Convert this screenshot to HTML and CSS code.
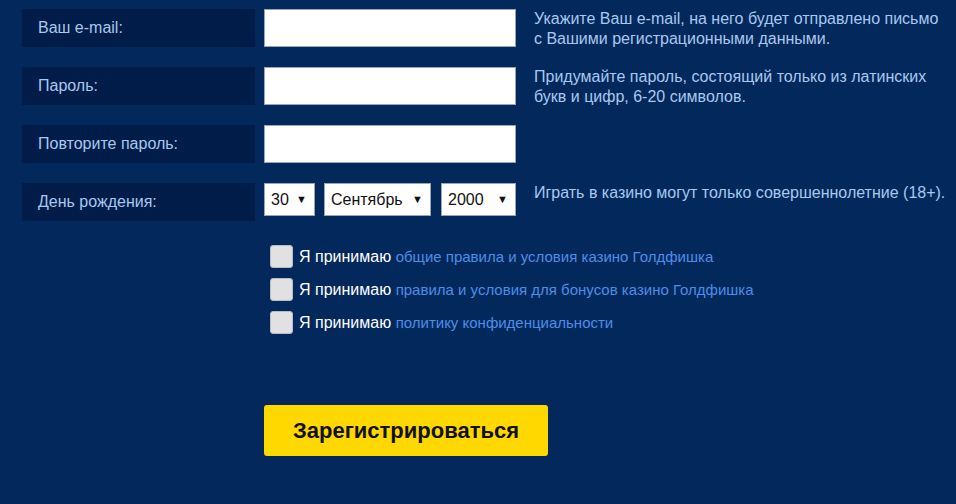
FILE: index.html
```html
<!DOCTYPE html>
<html lang="ru">
<head>
<meta charset="utf-8">
<title>Регистрация</title>
<link rel="stylesheet" href="styles.css">
</head>
<body>
<form class="reg">
  <div class="row">
    <div class="label">Ваш e-mail:</div>
    <div class="control"><input class="text" type="text"></div>
    <div class="help">Укажите Ваш e-mail, на него будет отправлено письмо<br>с Вашими регистрационными данными.</div>
  </div>
  <div class="row">
    <div class="label">Пароль:</div>
    <div class="control"><input class="text" type="password"></div>
    <div class="help">Придумайте пароль, состоящий только из латинских<br>букв и цифр, 6-20 символов.</div>
  </div>
  <div class="row">
    <div class="label">Повторите пароль:</div>
    <div class="control"><input class="text" type="password"></div>
    <div class="help"></div>
  </div>
  <div class="row">
    <div class="label">День рождения:</div>
    <div class="control selects">
      <div class="sel sel-day">30<span class="arr">▼</span></div>
      <div class="sel sel-month">Сентябрь<span class="arr">▼</span></div>
      <div class="sel sel-year">2000<span class="arr">▼</span></div>
    </div>
    <div class="help">Играть в казино могут только совершеннолетние (18+).</div>
  </div>
  <div class="checks">
    <label class="check"><span class="box"></span><span class="acc">Я принимаю</span> <a href="#">общие правила и условия казино Голдфишка</a></label>
    <label class="check"><span class="box"></span><span class="acc">Я принимаю</span> <a href="#">правила и условия для бонусов казино Голдфишка</a></label>
    <label class="check"><span class="box"></span><span class="acc">Я принимаю</span> <a href="#">политику конфиденциальности</a></label>
  </div>
  <div class="actions">
    <button type="button" class="submit">Зарегистрироваться</button>
  </div>
</form>
</body>
</html>
```
FILE: styles.css
```css
html, body {
  margin: 0;
  padding: 0;
  background: #03295c;
  font-family: "Liberation Sans", Arial, sans-serif;
}
.reg {
  padding: 9px 0 0 22px;
}
.row {
  display: flex;
  align-items: flex-start;
  height: 38px;
  margin-bottom: 20px;
}
.label {
  width: 217px;
  height: 38px;
  padding-left: 16px;
  background: #011c48;
  color: #a9c8ef;
  font-size: 16px;
  line-height: 38px;
}
.control {
  margin-left: 9px;
  width: 252px;
  flex: none;
}
.text {
  display: block;
  box-sizing: border-box;
  width: 252px;
  height: 38px;
  margin: 0;
  border: 1px solid #9aa6b6;
  background: #fff;
}
.help {
  margin-left: 18px;
  color: #a9c8ef;
  font-size: 16px;
  line-height: 20px;
  white-space: nowrap;
}
.selects {
  display: flex;
  gap: 9px;
}
.sel {
  box-sizing: border-box;
  height: 33px;
  background: #fff;
  border: 1px solid #9aa6b6;
  color: #111;
  font-size: 16px;
  line-height: 31px;
  padding: 0 7px 0 6px;
  display: flex;
  justify-content: space-between;
}
.arr {
  font-size: 11px;
}
.sel-day { width: 51px; }
.sel-month { width: 107px; }
.sel-year { width: 75px; margin-left: 1px; }
.checks {
  margin-left: 248px;
  margin-top: 24px;
  display: flex;
  flex-direction: column;
  gap: 10px;
}
.check {
  display: block;
  height: 23px;
  line-height: 23px;
  font-size: 16px;
  color: #fff;
  white-space: nowrap;
}
.box {
  display: inline-block;
  vertical-align: top;
  box-sizing: border-box;
  width: 23px;
  height: 23px;
  background: #e1e1e4;
  border: 1px solid #b9bcc2;
  border-radius: 3px;
  margin-right: 6px;
}
.acc {
  color: #fff;
}
.check a {
  color: #4d8de6;
  text-decoration: none;
  font-size: 15px;
}
.actions {
  margin-left: 242px;
  margin-top: 71px;
}
.submit {
  display: block;
  width: 284px;
  height: 51px;
  background: #ffd800;
  border: none;
  border-radius: 3px;
  font-family: "Liberation Sans", Arial, sans-serif;
  font-weight: bold;
  font-size: 22px;
  color: #111;
}
```
